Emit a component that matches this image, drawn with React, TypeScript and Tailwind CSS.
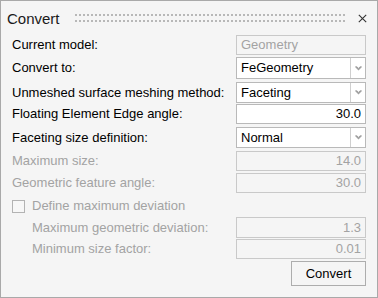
import React from "react";

const font = { fontFamily: '"Liberation Sans", Arial, sans-serif' };

function Chevron() {
  return (
    <svg width="7" height="5" viewBox="0 0 7 5">
      <path d="M0.5 0.5 L3.5 3.5 L6.5 0.5" fill="none" stroke="#a0a0a0" strokeWidth="1.3" />
      <path d="M1.5 0.5 L3.5 2.3 L5.5 0.5" fill="none" stroke="#a0a0a0" strokeWidth="1" />
    </svg>
  );
}

function Select({ value, h }: { value: string; h: string }) {
  return (
    <div className={`flex w-[130px] ${h} border border-[#b9b9b9] bg-white`}>
      <div className="flex flex-1 items-center pl-[4px] text-[13px] text-black">{value}</div>
      <div className="flex w-[15px] items-center justify-center border-l border-[#cfcfcf] bg-white">
        <Chevron />
      </div>
    </div>
  );
}

function Box({
  value,
  h,
  disabled,
  left,
}: {
  value: string;
  h: string;
  disabled?: boolean;
  left?: boolean;
}) {
  return (
    <div
      className={`flex w-[130px] ${h} items-center border px-[4px] text-[13px] ${
        left ? "justify-start" : "justify-end"
      } ${
        disabled
          ? "border-[#c9c9c9] bg-[#f5f5f5] text-[#a3a3a3]"
          : "border-[#b9b9b9] bg-white text-black"
      }`}
    >
      {value}
    </div>
  );
}

function Row({
  label,
  children,
  h,
  mt,
  disabled,
  indent,
}: {
  label: string;
  children: React.ReactNode;
  h: string;
  mt: string;
  disabled?: boolean;
  indent?: boolean;
}) {
  return (
    <div className={`flex ${h} ${mt} items-center`}>
      <div
        className={`flex-1 text-[13px] ${indent ? "pl-[31px]" : "pl-[11px]"} ${
          disabled ? "text-[#a3a3a3]" : "text-black"
        }`}
      >
        {label}
      </div>
      <div className="mr-[11px]">{children}</div>
    </div>
  );
}

export default function App() {
  return (
    <div
      className="flex h-[298px] w-[378px] flex-col border border-[#a9a9a9] bg-[#f5f5f5]"
      style={font}
    >
      {/* Title bar */}
      <div className="flex h-[34px] items-center pl-[6px] pr-[10px]">
        <div className="text-[15px] leading-none text-[#1a1a1a]">Convert</div>
        <div className="ml-[15px] flex h-[10px] flex-1 items-center">
          <svg width="100%" height="10">
            <defs>
              <pattern id="dots" x="0" y="0" width="4" height="6" patternUnits="userSpaceOnUse">
                <rect x="0" y="1" width="2" height="2" fill="#b8b8b8" />
              </pattern>
            </defs>
            <rect x="0" y="0" width="100%" height="10" fill="url(#dots)" />
          </svg>
        </div>
        <div className="ml-[12px] flex h-[10px] w-[9px] items-center justify-center">
          <svg width="9" height="9" viewBox="0 0 9 9">
            <path d="M0.8 0.8 L8.2 8.2 M8.2 0.8 L0.8 8.2" stroke="#333" strokeWidth="1.1" />
          </svg>
        </div>
      </div>

      <Row label="Current model:" h="h-[20px]" mt="mt-0">
        <Box value="Geometry" h="h-[20px]" disabled left />
      </Row>
      <Row label="Convert to:" h="h-[22px]" mt="mt-[2px]">
        <Select value="FeGeometry" h="h-[22px]" />
      </Row>
      <Row label="Unmeshed surface meshing method:" h="h-[21px]" mt="mt-[3px]">
        <Select value="Faceting" h="h-[21px]" />
      </Row>
      <Row label="Floating Element Edge angle:" h="h-[20px]" mt="mt-[1px]">
        <Box value="30.0" h="h-[20px]" />
      </Row>
      <Row label="Faceting size definition:" h="h-[21px]" mt="mt-[3px]">
        <Select value="Normal" h="h-[21px]" />
      </Row>
      <Row label="Maximum size:" h="h-[20px]" mt="mt-[3px]" disabled>
        <Box value="14.0" h="h-[20px]" disabled />
      </Row>
      <Row label="Geometric feature angle:" h="h-[20px]" mt="mt-[2px]" disabled>
        <Box value="30.0" h="h-[20px]" disabled />
      </Row>
      <div className="mt-[2px] flex h-[22px] items-center pl-[11px]">
        <div className="h-[13px] w-[13px] border border-[#b3b3b3] bg-[#f7f7f7]" />
        <div className="ml-[7px] text-[13px] text-[#a3a3a3]">Define maximum deviation</div>
      </div>
      <Row label="Maximum geometric deviation:" h="h-[21px]" mt="mt-0" disabled indent>
        <Box value="1.3" h="h-[21px]" disabled />
      </Row>
      <Row label="Minimum size factor:" h="h-[20px]" mt="mt-[1px]" disabled indent>
        <Box value="0.01" h="h-[20px]" disabled />
      </Row>
      <div className="mt-[2px] flex justify-end pr-[11px]">
        <div className="flex h-[25px] w-[75px] items-center justify-center border border-[#adadad] bg-[#f5f5f5] text-[13px] text-black">
          Convert
        </div>
      </div>
    </div>
  );
}
